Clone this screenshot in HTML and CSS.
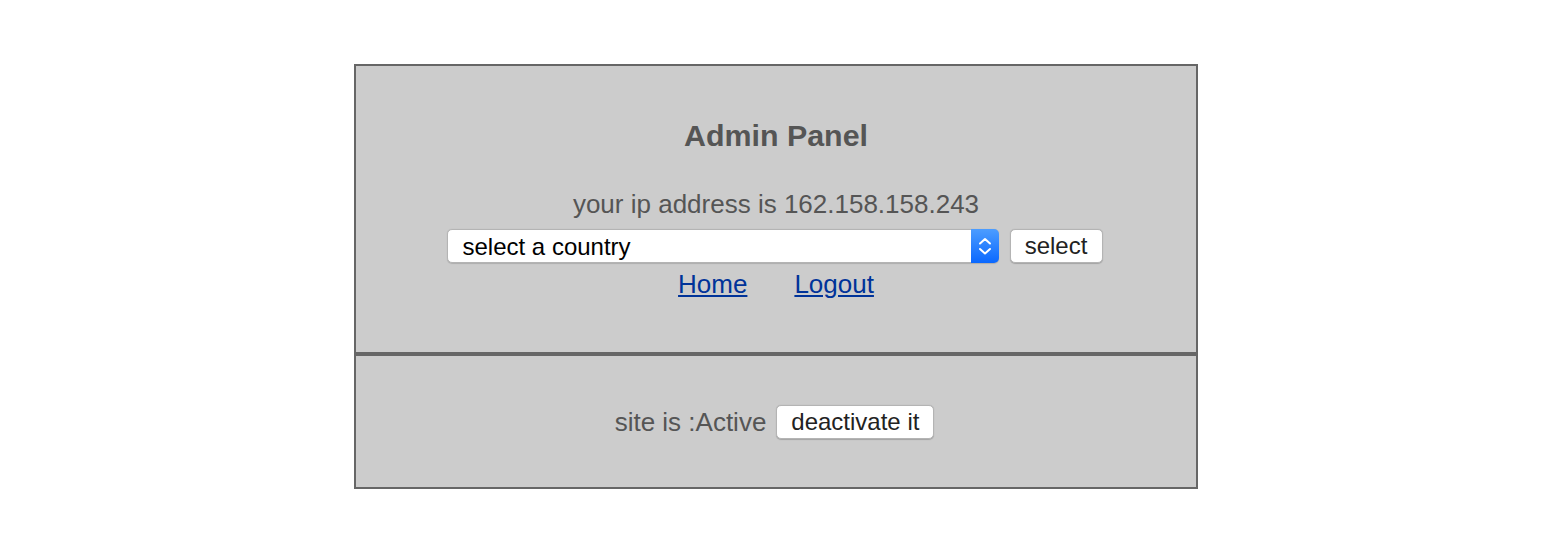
FILE: index.html
```html
<!DOCTYPE html>
<html>
<head>
<meta charset="utf-8">
<title>Admin Panel</title>
<link rel="stylesheet" href="styles.css">
</head>
<body>
<div class="panel">
  <section class="top">
    <h3 class="title">Admin Panel</h3>
    <p class="ip">your ip address is 162.158.158.243</p>
    <form class="country-row">
      <div class="select-wrap">
        <select class="country">
          <option>select a country</option>
        </select>
        <span class="arrow">
          <svg width="28" height="34" viewBox="0 0 28 34">
            <path d="M9 14.5 L14 10 L19 14.5" fill="none" stroke="#fff" stroke-width="2" stroke-linecap="round" stroke-linejoin="round"/>
            <path d="M9 20 L14 24.5 L19 20" fill="none" stroke="#fff" stroke-width="2" stroke-linecap="round" stroke-linejoin="round"/>
          </svg>
        </span>
      </div>
      <button type="button" class="btn">select</button>
    </form>
    <nav class="links">
      <a href="#">Home</a>
      <a href="#">Logout</a>
    </nav>
  </section>
  <section class="bottom">
    <span class="status">site is :Active</span>
    <button type="button" class="btn">deactivate it</button>
  </section>
</div>
</body>
</html>
```

FILE: styles.css
```css
html, body {
  margin: 0;
  padding: 0;
  background: #fff;
}

body {
  font-family: "Liberation Sans", Arial, Helvetica, sans-serif;
  color: #555;
  padding: 64px 1px 0 0;
}

.panel {
  width: 844px;
  margin: 0 auto;
  background: #ccc;
}

.top {
  box-sizing: border-box;
  height: 290px;
  border: 2px solid #666;
  padding-top: 52px;
  display: flex;
  flex-direction: column;
  align-items: center;
}

.title {
  margin: 0;
  font-size: 30.4px;
  font-weight: bold;
  line-height: 35px;
  color: #555;
}

.ip {
  margin: 36px 0 0 0;
  font-size: 26px;
  line-height: 30px;
}

.country-row {
  margin: 10px 3px 0 0;
  display: flex;
  align-items: center;
  gap: 11px;
}

.select-wrap {
  position: relative;
  width: 552px;
  height: 34px;
}

.country {
  -webkit-appearance: none;
  appearance: none;
  box-sizing: border-box;
  width: 100%;
  height: 34px;
  margin: 0;
  padding: 0 0 0 15px;
  border: 1px solid #b4b4b4;
  border-radius: 5px;
  background: #fff;
  color: #000;
  font-family: "Liberation Sans", Arial, sans-serif;
  font-size: 24px;
  box-shadow: 0 0.5px 1px rgba(0,0,0,0.15);
}

.arrow {
  position: absolute;
  right: 0;
  top: 0;
  width: 28px;
  height: 34px;
  border-radius: 0 5px 5px 0;
  background: linear-gradient(#4c9dff, #0a68ff);
  display: flex;
}

.btn {
  box-sizing: border-box;
  height: 34px;
  margin: 0;
  padding: 0 14px;
  border: 1px solid #b4b4b4;
  border-radius: 5px;
  background: #fff;
  color: #222;
  font-family: "Liberation Sans", Arial, sans-serif;
  font-size: 24px;
  line-height: 32px;
  box-shadow: 0 0.5px 1px rgba(0,0,0,0.2);
}

.country-row .btn {
  width: 93px;
  margin-top: -1px;
}

.links {
  margin-top: 6px;
  display: flex;
  gap: 47px;
  font-size: 26px;
  line-height: 30px;
}

.links a {
  color: #003399;
  text-decoration: underline;
}

.bottom {
  box-sizing: border-box;
  height: 135px;
  border: 2px solid #666;
  display: flex;
  align-items: center;
  justify-content: center;
  gap: 10px;
  padding-right: 3px;
}

.status {
  font-size: 26px;
  line-height: 30px;
}

.bottom .btn {
  width: 158px;
  padding: 0;
}
```
